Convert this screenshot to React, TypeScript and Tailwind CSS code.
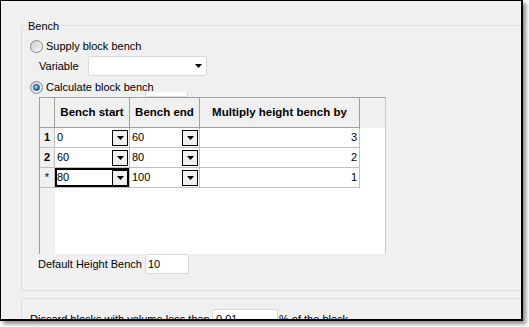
import React from 'react';

interface BenchRow {
  head: string;
  start: string;
  end: string;
  mult: string;
  focus?: boolean;
}

const ROWS: BenchRow[] = [
  { head: '1', start: '0', end: '60', mult: '3' },
  { head: '2', start: '60', end: '80', mult: '2' },
  { head: '*', start: '80', end: '100', mult: '1', focus: true },
];

const Arrow: React.FC = () => (
  <svg width="7" height="4" viewBox="0 0 7 4">
    <path d="M0 0h7L3.5 4z" fill="#000" />
  </svg>
);

const CellButton: React.FC = () => (
  <div className="w-[16px] h-[16px] shrink-0 border border-black bg-[#f0f0f0] flex items-center justify-center">
    <Arrow />
  </div>
);

const Radio: React.FC<{ checked?: boolean }> = ({ checked }) => (
  <div className="w-[13px] h-[13px] shrink-0 rounded-full border border-[#8a8a8a] bg-[linear-gradient(135deg,#cfcfcf,#f6f6f6)] flex items-center justify-center">
    {checked && (
      <div className="w-[7px] h-[7px] rounded-full border border-[#1d4a78] bg-[radial-gradient(circle_at_35%_35%,#a6e4ff,#2a86d0_55%,#154f8a)]" />
    )}
  </div>
);

const App: React.FC = () => {
  return (
    <div className="min-h-screen bg-white">
      <div className="w-[523px] h-[321px] overflow-hidden border-l border-t border-r-2 border-b-2 border-black bg-[#f0f0f0] shadow-[3px_3px_4px_rgba(0,0,0,0.45)] text-[11px] leading-[13px] text-black font-['Liberation_Sans',Arial,sans-serif]">
        {/* Bench group */}
        <div className="relative ml-[20px] mt-[24px] w-[560px] h-[266px] rounded-[3px] border border-[#d5dfe5]">
          <span className="absolute left-[4px] top-[-6px] px-[2px] bg-[#f0f0f0]">Bench</span>

          <div className="mt-[14px] ml-[8px] h-[13px] flex items-center gap-[3px]">
            <Radio />
            <span>Supply block bench</span>
          </div>

          <div className="mt-[3px] h-[20px] flex items-center">
            <span className="ml-[17px] w-[49px]">Variable</span>
            <div className="w-[119px] h-[20px] rounded-[2px] border border-[#d9d9d9] bg-white flex items-center justify-end pr-[4px]">
              <Arrow />
            </div>
          </div>

          <div className="mt-[5px] ml-[8px] h-[13px] flex items-center gap-[3px]">
            <Radio checked />
            <span>Calculate block bench</span>
          </div>
          {/* textbox hidden behind the grid */}
          <div className="absolute left-[123px] top-[66px] w-[43px] h-[5px] rounded-b-[2px] border-x border-b border-[#dcdcdc] bg-white" />

          {/* Grid */}
          <div className="mt-[3px] ml-[17px] w-[347px] h-[157px] flex flex-col border-l border-t border-r border-[#a0a0a0] border-r-[#c8c8c8] bg-white">
            <div className="h-[30px] shrink-0 flex bg-[#f0f0f0] font-bold text-[11.5px]">
              <div className="w-[15px] border-r border-b border-[#a0a0a0]" />
              <div className="w-[75px] border-r border-b border-[#a0a0a0] flex items-center justify-center">Bench start</div>
              <div className="w-[70px] border-r border-b border-[#a0a0a0] flex items-center justify-center">Bench end</div>
              <div className="w-[160px] border-r border-b border-[#a0a0a0] flex items-center justify-center">Multiply height bench by</div>
              <div className="flex-1" />
            </div>
            {ROWS.map(r => (
              <div key={r.head} className="h-[20px] shrink-0 flex">
                <div className={`w-[15px] border-r border-b border-[#c0c0c0] bg-[#f0f0f0] flex items-center justify-center ${r.head === '*' ? '' : 'font-bold'}`}>{r.head}</div>
                <div className={`w-[75px] border-r border-b border-[#c0c0c0] flex items-center justify-between pl-[2px] pr-[1px] ${r.focus ? 'shadow-[inset_0_0_0_2px_#000]' : ''}`}>
                  <span>{r.start}</span>
                  <CellButton />
                </div>
                <div className="w-[70px] border-r border-b border-[#c0c0c0] flex items-center justify-between pl-[2px] pr-[1px]">
                  <span>{r.end}</span>
                  <CellButton />
                </div>
                <div className="w-[160px] border-r border-b border-[#c0c0c0] flex items-center justify-end pr-[2px]">{r.mult}</div>
                <div className="flex-1" />
              </div>
            ))}
            <div className="flex-1 flex">
              <div className="w-[15px] bg-[#f0f0f0]" />
              <div className="flex-1" />
            </div>
          </div>

          <div className="h-[20px] flex items-center">
            <span className="ml-[16px] w-[107px]">Default Height Bench</span>
            <div className="w-[44px] h-[20px] rounded-[2px] border border-[#d9d9d9] bg-white flex items-center pl-[2px]">10</div>
          </div>
        </div>

        {/* Discard group */}
        <div className="ml-[20px] mt-[7px] w-[560px] h-[60px] rounded-[3px] border border-[#d5dfe5]">
          <div className="mt-[10px] h-[20px] flex items-center">
            <span className="ml-[8px] w-[182px]">Discard blocks with volume less than</span>
            <div className="w-[66px] h-[20px] rounded-[2px] border border-[#d9d9d9] bg-white flex items-center pl-[3px]">0.01</div>
            <span className="ml-[1px]">% of the block</span>
          </div>
        </div>
      </div>
    </div>
  );
};

export default App;
